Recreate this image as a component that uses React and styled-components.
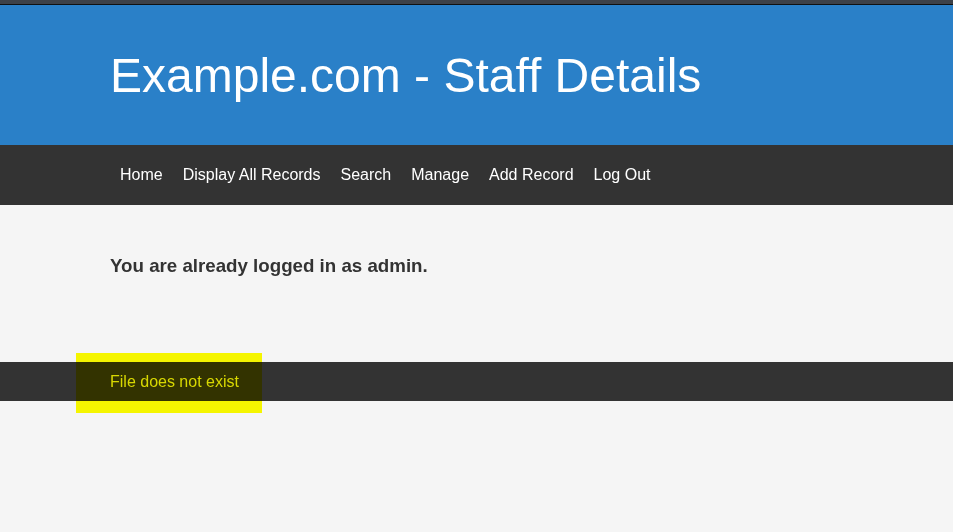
import React from "react";
import styled, { createGlobalStyle } from "styled-components";

const GlobalStyle = createGlobalStyle`
  html, body {
    margin: 0;
    padding: 0;
    background: #f5f5f5;
    font-family: "Liberation Sans", Arial, sans-serif;
  }
`;

const Page = styled.div`
  min-height: 532px;
  background: #f5f5f5;
`;

const TopStrip = styled.div`
  height: 4px;
  background: #3d4148;
  border-bottom: 1px solid #111;
`;

const Header = styled.header`
  height: 140px;
  background: #2a80c8;
  display: flex;
  align-items: center;
  padding: 0 110px;
`;

const Title = styled.h1`
  margin: 0;
  color: #fff;
  font-size: 48px;
  font-weight: normal;
`;

const Nav = styled.nav`
  height: 60px;
  background: #333;
  display: flex;
  align-items: center;
  padding: 0 110px;
`;

const NavLink = styled.a`
  color: #fff;
  font-size: 16px;
  padding: 0 10px;
  text-decoration: none;
  cursor: pointer;
`;

const Main = styled.main`
  padding: 50px 110px 85px;
`;

const Notice = styled.h3`
  margin: 0;
  font-size: 18.72px;
  font-weight: bold;
  color: #333;
`;

const Footer = styled.footer`
  position: relative;
  height: 39px;
  background: #333;
  display: flex;
  align-items: center;
  padding: 0 110px;
`;

const FooterText = styled.span`
  color: #d8d8d8;
  font-size: 16px;
`;

const Highlight = styled.div`
  position: absolute;
  left: 76px;
  top: -9px;
  width: 186px;
  height: 60px;
  background: #ffff00;
  mix-blend-mode: multiply;
  pointer-events: none;
`;

const links = ["Home", "Display All Records", "Search", "Manage", "Add Record", "Log Out"];

export default function App() {
  return (
    <>
      <GlobalStyle />
      <Page>
        <TopStrip />
        <Header>
          <Title>Example.com - Staff Details</Title>
        </Header>
        <Nav>
          {links.map((l) => (
            <NavLink key={l}>{l}</NavLink>
          ))}
        </Nav>
        <Main>
          <Notice>You are already logged in as admin.</Notice>
        </Main>
        <Footer>
          <FooterText>File does not exist</FooterText>
          <Highlight />
        </Footer>
      </Page>
    </>
  );
}
